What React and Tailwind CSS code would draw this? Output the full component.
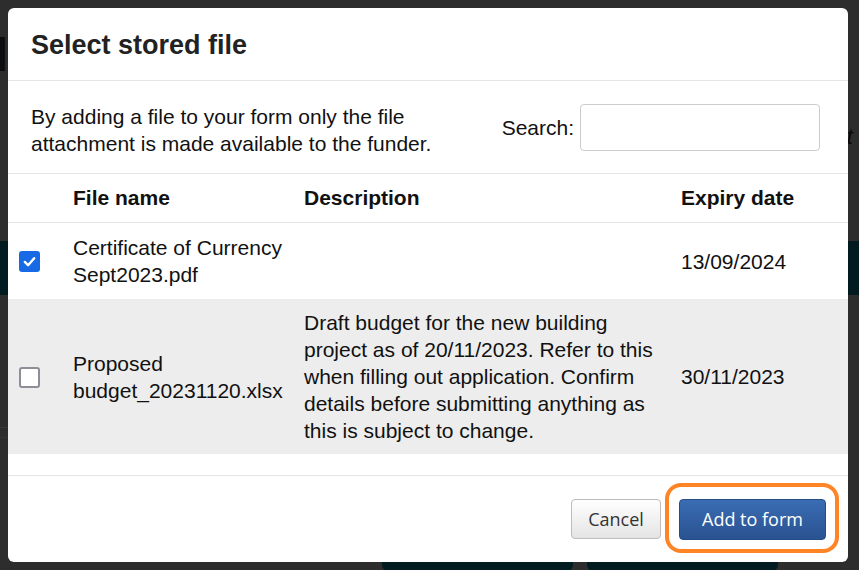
import React from "react";

function CheckBox({ checked }) {
  if (checked) {
    return (
      <div className="w-[21px] h-[21px] rounded-[3px] bg-[#1769e6] flex items-center justify-center">
        <svg width="15" height="15" viewBox="0 0 16 16">
          <path d="M3 8.5 L6.5 12 L13 4.5" fill="none" stroke="#fff" strokeWidth="2.6" strokeLinecap="round" strokeLinejoin="round" />
        </svg>
      </div>
    );
  }
  return <div className="w-[21px] h-[21px] rounded-[3px] border-2 border-[#8e8e98] bg-white" />;
}

export default function App() {
  return (
    <div className="relative w-[859px] h-[570px] overflow-hidden bg-[#2d2d2d] font-['Liberation_Sans',Arial,sans-serif]">
      {/* page content behind overlay */}
      <div className="flex flex-col">
        <div className="h-[30px]" />
        <div className="ml-[-20px] text-[46px] font-bold leading-[50px] text-[#0d0d0d]">d</div>
        <div className="flex justify-end h-[70px] items-start">
          <span className="mr-[-6px] mt-[40px] text-[22px] italic text-[#0a0a0a]">t .</span>
        </div>
        <div className="h-[91px]" />
        <div className="h-[54px] bg-[#021b20]" />
        <div className="h-[132px]" />
        <div className="h-px bg-[#383838] w-[10px]" />
        <div className="h-[9px]" />
        <div className="h-px bg-[#333] w-[10px]" />
        <div className="h-[119px]" />
        <div className="flex gap-[14px] pl-[382px]">
          <div className="w-[191px] h-[14px] rounded-[6px] bg-[#021b20]" />
          <div className="w-[191px] h-[14px] rounded-[6px] bg-[#021b20]" />
        </div>
      </div>

      {/* modal */}
      <div className="absolute left-[8px] top-[8px] w-[840px] h-[554px] bg-white rounded-[6px] overflow-hidden flex flex-col text-[#111]">
        <div className="h-[73px] shrink-0 border-b border-[#e6e6e6] flex items-center pl-[23px]">
          <h1 className="text-[27px] font-bold leading-[30px] text-[#222] pt-[1px]">Select stored file</h1>
        </div>
        <div className="h-[93px] shrink-0 border-b border-[#e6e6e6] flex items-center justify-between pl-[23px] pr-[28px]">
          <p className="text-[21px] leading-[27px] w-[420px] pt-[6px]">
            By adding a file to your form only the file attachment is made available to the funder.
          </p>
          <div className="flex items-center gap-[6px] mt-[1px]">
            <span className="text-[21px]">Search:</span>
            <div className="w-[240px] h-[47px] border border-[#cccccc] rounded-[4px] bg-white" />
          </div>
        </div>
        <div className="grid grid-cols-[53px_231px_377px_1fr] h-[49px] shrink-0 border-b border-[#e6e6e6] items-center text-[21px] font-bold">
          <div />
          <div className="pl-[12px]">File name</div>
          <div className="pl-[12px]">Description</div>
          <div className="pl-[12px]">Expiry date</div>
        </div>
        <div className="grid grid-cols-[53px_231px_377px_1fr] h-[76px] shrink-0 items-center text-[21px] leading-[27px]">
          <div className="pl-[11px] pt-[1px]"><CheckBox checked /></div>
          <div className="pl-[12px] pr-[5px]">Certificate of Currency Sept2023.pdf</div>
          <div className="pl-[12px]" />
          <div className="pl-[12px]">13/09/2024</div>
        </div>
        <div className="grid grid-cols-[53px_231px_377px_1fr] h-[155px] shrink-0 items-center text-[21px] leading-[27px] bg-[#ededed]">
          <div className="pl-[11px] pt-[2px]"><CheckBox /></div>
          <div className="pl-[12px] pr-[5px]">Proposed budget_20231120.xlsx</div>
          <div className="pl-[12px] pr-[10px]">
            Draft budget for the new building project as of 20/11/2023. Refer to this when filling out application. Confirm details before submitting anything as this is subject to change.
          </div>
          <div className="pl-[12px]">30/11/2023</div>
        </div>
        <div className="h-[22px] shrink-0 border-b border-[#e6e6e6]" />
        <div className="flex-1 flex items-center justify-end pr-[22px] gap-[18px] font-['Open_Sans',sans-serif] text-[18px]">
          <button className="w-[90px] h-[40px] rounded-[4px] border border-[#bdbdbd] bg-gradient-to-b from-white to-[#e4e4e4] text-[#333]">
            Cancel
          </button>
          <div className="relative">
            <button className="w-[147px] h-[41px] rounded-[4px] border border-[#264c86] bg-gradient-to-b from-[#3a6db4] to-[#2a5291] text-white">
              Add to form
            </button>
            <div className="absolute left-[-14px] top-[-16px] w-[174px] h-[70px] rounded-[16px] border-[4px] border-[#ff8426] pointer-events-none" />
          </div>
        </div>
      </div>
    </div>
  );
}
